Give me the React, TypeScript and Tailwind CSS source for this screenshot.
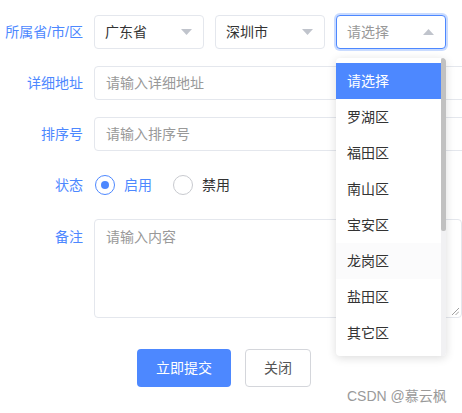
import React from 'react';

const font = { fontFamily: '"Liberation Sans", "Noto Sans CJK SC", sans-serif' };

const districts = ['请选择', '罗湖区', '福田区', '南山区', '宝安区', '龙岗区', '盐田区', '其它区'];

function Caret({ up = false }: { up?: boolean }) {
  return (
    <svg width="11" height="6" viewBox="0 0 11 6" className="shrink-0">
      <path d={up ? 'M0 6 L5.5 0 L11 6 Z' : 'M0 0 L5.5 6 L11 0 Z'} fill="#c0c4cc" />
    </svg>
  );
}

function Select({ value, placeholder, focused }: { value?: string; placeholder?: string; focused?: boolean }) {
  return (
    <div
      className={`flex h-[34px] w-[110px] items-center justify-between rounded-[4px] border bg-white pl-[10px] pr-[11px] text-[14px] ${
        focused ? 'border-[#4d88ff] ring-2 ring-[#4d88ff]/30' : 'border-[#e4e7ed]'
      }`}
    >
      <span className={value ? 'text-[#333]' : 'text-[#999]'}>{value ?? placeholder}</span>
      <Caret up={focused} />
    </div>
  );
}

function Row({ label, children, top = false }: { label: string; children: React.ReactNode; top?: boolean }) {
  return (
    <div className={`flex gap-[11px] ${top ? 'items-start' : 'items-center'}`}>
      <label className={`w-[83px] shrink-0 text-right text-[14px] text-[#4d88ff] ${top ? 'pt-[8px]' : ''}`}>{label}</label>
      {children}
    </div>
  );
}

function Radio({ label, checked }: { label: string; checked?: boolean }) {
  return (
    <div className="flex items-center gap-[9px]">
      <span
        className={`flex h-[20px] w-[20px] items-center justify-center rounded-full border-[1.5px] ${
          checked ? 'border-[#4d88ff]' : 'border-[#c8cacf]'
        }`}
      >
        {checked && <span className="h-[8px] w-[8px] rounded-full bg-[#4d88ff]" />}
      </span>
      <span className={`text-[14px] ${checked ? 'text-[#4d88ff]' : 'text-[#333]'}`}>{label}</span>
    </div>
  );
}

export default function App() {
  return (
    <div className="relative h-[413px] w-[462px] overflow-hidden bg-white" style={font}>
      <div className="flex w-[520px] flex-col gap-[17px] pt-[15px]">
        <Row label="所属省/市/区">
          <div className="flex gap-[11px]">
            <Select value="广东省" />
            <Select value="深圳市" />
            <Select placeholder="请选择" focused />
          </div>
        </Row>
        <Row label="详细地址">
          <div className="flex h-[34px] flex-1 items-center rounded-[4px] border border-[#e4e7ed] px-[11px] text-[14px] text-[#999]">
            请输入详细地址
          </div>
        </Row>
        <Row label="排序号">
          <div className="flex h-[34px] flex-1 items-center rounded-[4px] border border-[#e4e7ed] px-[11px] text-[14px] text-[#999]">
            请输入排序号
          </div>
        </Row>
        <Row label="状态">
          <div className="flex h-[34px] items-center gap-[21px] pl-[1px]">
            <Radio label="启用" checked />
            <Radio label="禁用" />
          </div>
        </Row>
        <Row label="备注" top>
          <div className="relative h-[99px] w-[368px] rounded-[4px] border border-[#e4e7ed] px-[11px] pt-[7px] text-[14px] text-[#999]">
            请输入内容
            <svg width="7" height="7" viewBox="0 0 7 7" className="absolute bottom-[2px] right-[2px]">
              <path d="M0 7 L7 0 M3.5 7 L7 3.5" stroke="#888" strokeWidth="0.8" />
            </svg>
          </div>
        </Row>
        <div className="mt-[14px] flex gap-[14px] pl-[137px]">
          <button className="h-[38px] w-[94px] rounded-[4px] bg-[#4d88ff] text-[14px] text-white">立即提交</button>
          <button className="h-[38px] w-[66px] rounded-[4px] border border-[#d4d6db] bg-white text-[14px] text-[#555]">关闭</button>
        </div>
      </div>

      <div className="absolute left-[336px] top-[58px] h-[298px] w-[110px] overflow-hidden rounded-[4px] bg-white shadow-[0_2px_10px_rgba(0,0,0,0.14)]">
        <ul className="w-[105px] pt-[5px]">
          {districts.map((d, i) => (
            <li
              key={d}
              className={`flex h-[36px] items-center pl-[11px] text-[14px] ${
                i === 0 ? 'bg-[#4d88ff] text-white' : i === 5 ? 'bg-[#fbfbfc] text-[#333]' : 'text-[#333]'
              }`}
            >
              {d}
            </li>
          ))}
        </ul>
        <div className="absolute right-0 top-0 h-full w-[5px] bg-[#f1f1f3]">
          <div className="h-[173px] w-full rounded-[2px] bg-[#c1c1c1]" />
        </div>
      </div>

      <div className="absolute left-[347px] top-[386px] text-[14px] text-[#9a9a9a]" style={{ textShadow: '0 0 1px #fff' }}>
        CSDN @慕云枫
      </div>
    </div>
  );
}
